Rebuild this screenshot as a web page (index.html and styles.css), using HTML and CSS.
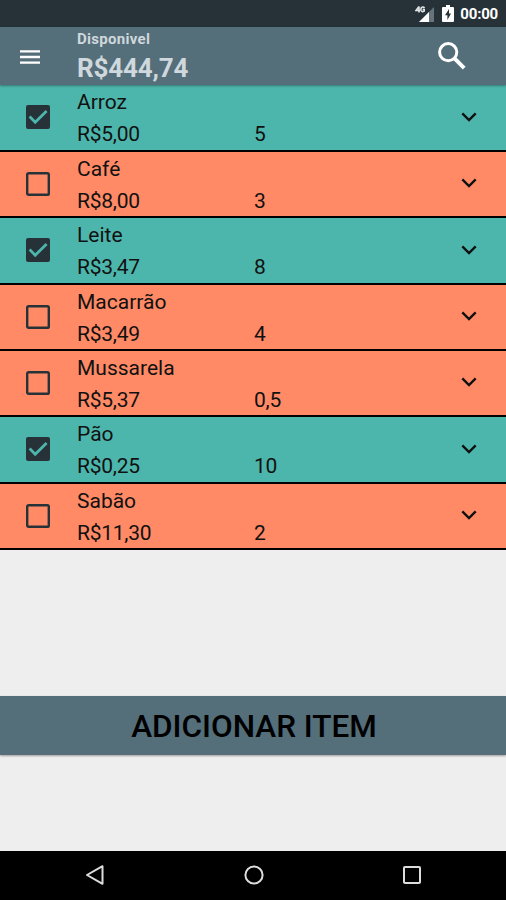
FILE: index.html
```
<!DOCTYPE html>
<html lang="pt-BR">
<head>
<meta charset="utf-8">
<title>Lista de compras</title>
<link rel="stylesheet" href="styles.css">
</head>
<body>
<svg class="defs" width="0" height="0" aria-hidden="true">
  <symbol id="checked" viewBox="0 0 24 24"><path fill="#263238" d="M2 0h20a2 2 0 0 1 2 2v20a2 2 0 0 1-2 2H2a2 2 0 0 1-2-2V2a2 2 0 0 1 2-2z"/><path d="M3.600 11.600l5.600 5.600L20.600 6" fill="none" stroke="#4db6ac" stroke-width="2.800"/></symbol>
  <symbol id="unchecked" viewBox="0 0 24 24"><rect x="1.2" y="1.2" width="21.6" height="21.6" rx="1.4" fill="none" stroke="#263238" stroke-width="2.4"/></symbol>
  <symbol id="chevron" viewBox="0 0 16 10"><path d="M1.3 1.3L8 8l6.7-6.7" fill="none" stroke="#111" stroke-width="2.4"/></symbol>
</svg>
<div class="screen">
  <div class="status">
    <svg class="signal" width="20" height="18" viewBox="0 0 20 18"><path d="M19 2v15H4z" fill="#66737a"/><path d="M14 7v10H4z" fill="#fff"/><path d="M4 1.500L1 5.500h4M4 1.500v6M9.500 3Q8.500 1.500 7 2.200T6 5.500Q7 7.500 9.200 6V4.500H7.600" fill="none" stroke="#e2e6e8" stroke-width="1.600"/></svg>
    <svg class="battery" width="12" height="18" viewBox="0 0 12 18"><path d="M4 0h4v2h3q1 0 1 1v13q0 1-1 1H1q-1 0-1-1V3q0-1 1-1h3z" fill="#fff"/><path d="M7 4L3 10.300h2.400V15L9 8.500H7z" fill="#263238"/></svg>
    <span class="clock">00:00</span>
  </div>
  <header class="bar">
    <svg class="menu" width="20" height="14" viewBox="0 0 20 14"><path d="M0 1.300h20M0 7h20M0 12.700h20" stroke="#fff" stroke-width="2.300"/></svg>
    <div class="balance">
      <div class="label">Disponivel</div>
      <div class="amount">R$444,74</div>
    </div>
    <svg class="search" width="28" height="28" viewBox="0 0 28 28"><circle cx="10.200" cy="10.200" r="8.600" fill="none" stroke="#fff" stroke-width="3"/><path d="M16.200 16.200l10 10" stroke="#fff" stroke-width="4"/></svg>
  </header>
  <main class="list">
    <div class="row done"><svg class="check"><use href="#checked"/></svg><div class="name">Arroz</div><div class="price">R$5,00</div><div class="qty">5</div><svg class="chev"><use href="#chevron"/></svg></div>
    <div class="row"><svg class="check"><use href="#unchecked"/></svg><div class="name">Café</div><div class="price">R$8,00</div><div class="qty">3</div><svg class="chev"><use href="#chevron"/></svg></div>
    <div class="row done"><svg class="check"><use href="#checked"/></svg><div class="name">Leite</div><div class="price">R$3,47</div><div class="qty">8</div><svg class="chev"><use href="#chevron"/></svg></div>
    <div class="row"><svg class="check"><use href="#unchecked"/></svg><div class="name">Macarrão</div><div class="price">R$3,49</div><div class="qty">4</div><svg class="chev"><use href="#chevron"/></svg></div>
    <div class="row"><svg class="check"><use href="#unchecked"/></svg><div class="name">Mussarela</div><div class="price">R$5,37</div><div class="qty">0,5</div><svg class="chev"><use href="#chevron"/></svg></div>
    <div class="row done"><svg class="check"><use href="#checked"/></svg><div class="name">Pão</div><div class="price">R$0,25</div><div class="qty">10</div><svg class="chev"><use href="#chevron"/></svg></div>
    <div class="row"><svg class="check"><use href="#unchecked"/></svg><div class="name">Sabão</div><div class="price">R$11,30</div><div class="qty">2</div><svg class="chev"><use href="#chevron"/></svg></div>
  </main>
  <button class="add">ADICIONAR ITEM</button>
  <nav class="nav">
    <svg width="20" height="22" viewBox="0 0 20 22"><path d="M17.500 2.200v17.600L2 11z" fill="none" stroke="#ddd" stroke-width="2" stroke-linejoin="round"/></svg>
    <svg width="20" height="22" viewBox="0 0 20 22"><circle cx="10" cy="11" r="8.600" fill="none" stroke="#ddd" stroke-width="2"/></svg>
    <svg width="20" height="22" viewBox="0 0 20 22"><rect x="2" y="3" width="16" height="16" rx="1" fill="none" stroke="#ddd" stroke-width="2"/></svg>
  </nav>
</div>
</body>
</html>
```
FILE: styles.css
```
* { box-sizing: border-box; }
body { margin: 0; font-family: Roboto, sans-serif; }
svg { display: block; }
.defs { position: absolute; }
.screen { width: 506px; height: 900px; display: flex; flex-direction: column; background: #eee; overflow: hidden; }
.status { flex: none; height: 27px; background: #263238; color: #fff; display: flex; align-items: center; justify-content: flex-end; padding-right: 8px; }
.signal { margin-right: 7px; }
.battery { margin-right: 6.5px; }
.clock { font-size: 15px; font-weight: 700; line-height: 27px; padding-top: 1px; letter-spacing: -.2px; }
.bar { flex: none; height: 58.4px; background: #546e7a; display: flex; align-items: flex-start; padding: 0 40px 0 20px; z-index: 1; box-shadow: 0 1px 2px rgba(0,0,0,.35); }
.menu { margin-top: 22.5px; }
.balance { flex: 1; margin-left: 37px; padding-top: 2px; color: #cfd8dc; font-weight: 700; }
.label { font-size: 15px; line-height: 20px; letter-spacing: .3px; }
.amount { font-size: 26px; line-height: 39px; letter-spacing: -.15px; }
.search { margin-top: 15px; }
.list { flex: none; height: 464.6px; display: grid; grid-template-rows: repeat(7, 1fr); }
.row { display: grid; grid-template-columns: 51px 177px 1fr 30px; grid-template-rows: 32px 32px; padding-left: 26px; background: #ff8a65; border-bottom: 2.4px solid #000; color: #111; font-size: 21px; line-height: 35px; }
.done { background: #4db6ac; }
.check { grid-area: 1 / 1 / 3 / 2; width: 24px; height: 24px; align-self: center; }
.name { grid-area: 1 / 2 / 2 / 4; }
.price { grid-area: 2 / 2; letter-spacing: -.25px; line-height: 34px; }
.qty { grid-area: 2 / 3; letter-spacing: -.25px; line-height: 34px; }
.chev { grid-area: 1 / 4 / 3 / 5; width: 16px; height: 10px; align-self: center; margin: 0 0 1px -15px; }
.add { flex: none; height: 58.5px; margin-top: 146.500px; border: 0; padding: 2px 0 0 2px; background: #546e7a; color: #000; font: 500 31.500px/58px Roboto, sans-serif; box-shadow: 0 1px 2px rgba(0,0,0,.35); }
.nav { height: 49.500px; margin-top: auto; background: #000; display: flex; align-items: center; justify-content: space-between; padding: 0 84px 0 85px; }
```
